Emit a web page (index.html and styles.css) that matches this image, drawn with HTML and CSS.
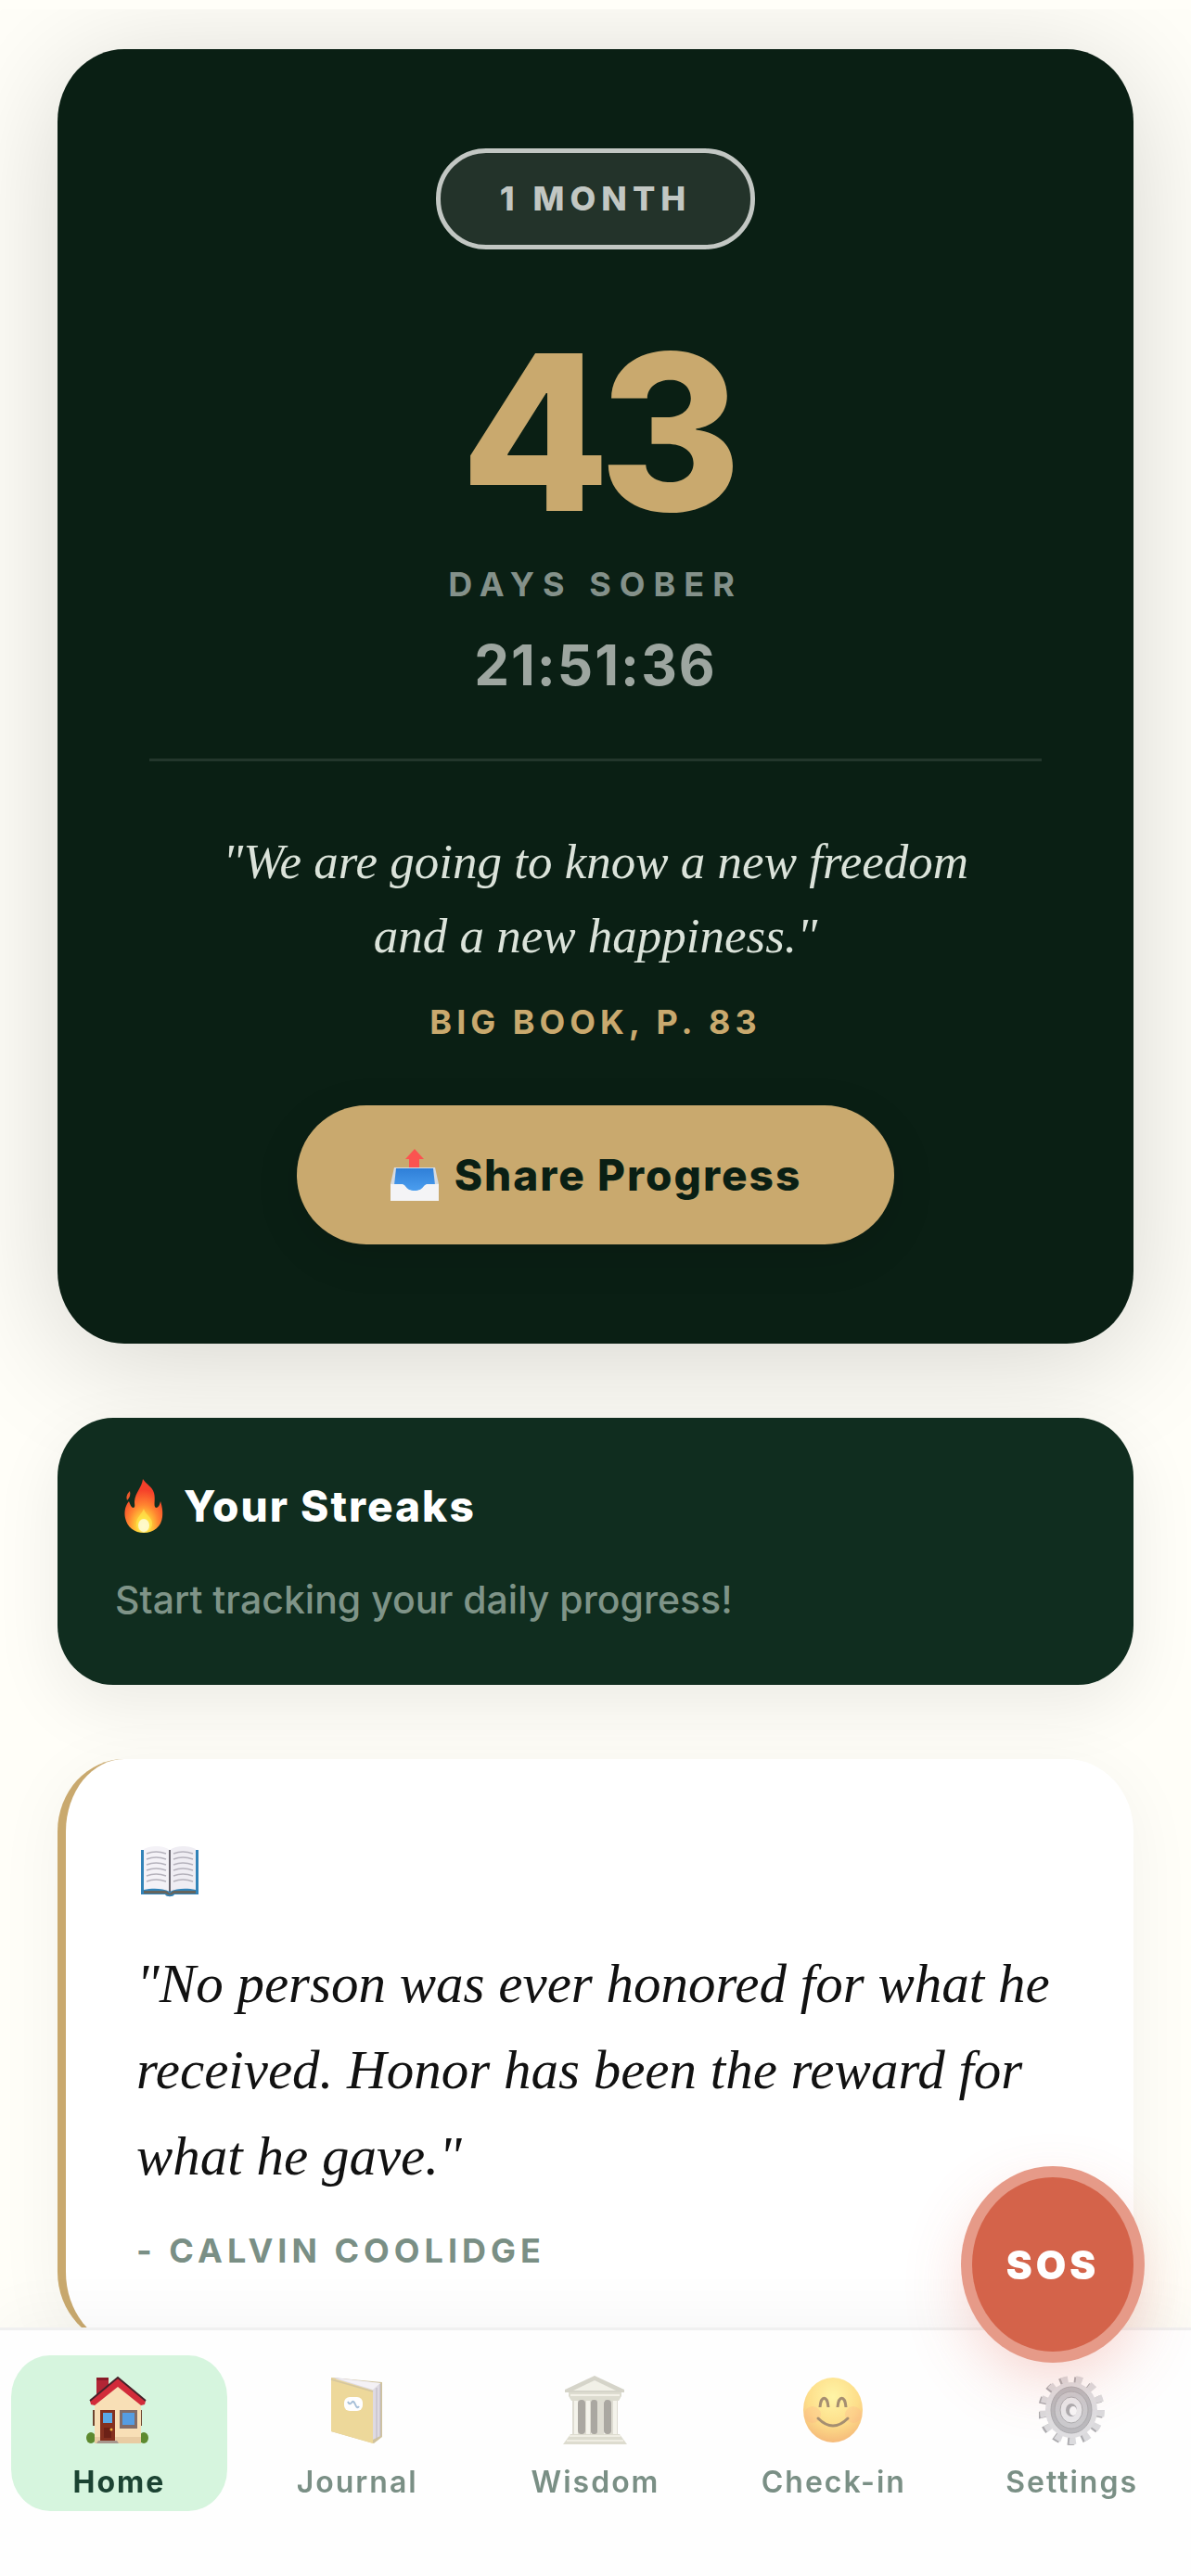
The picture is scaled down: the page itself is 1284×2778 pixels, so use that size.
FILE: index.html
```
<!DOCTYPE html>
<html lang="en">
<head>
  <meta charset="UTF-8">
  <meta name="viewport" content="width=device-width, initial-scale=1.0">
  <title>Days Sober</title>
  <link rel="stylesheet" href="styles.css">
</head>
<body>
  <header class="top-bar"></header>

  <main class="container">
    <section class="hero">
      <div class="badge">1 MONTH</div>
      <div class="days">43</div>
      <div class="days-label">DAYS SOBER</div>
      <div class="clock">21:51:36</div>
      <hr class="divider">
      <p class="promise">"We are going to know a new freedom and a new happiness."</p>
      <div class="source">BIG BOOK, P. 83</div>
      <button class="share-btn" type="button">
        <svg class="share-icon" viewBox="0 0 54 58" aria-hidden="true">
          <defs>
            <linearGradient id="tray" x1="0" y1="0" x2="0" y2="1">
              <stop offset="0" stop-color="#2f7fd8"/>
              <stop offset="1" stop-color="#4da0f0"/>
            </linearGradient>
          </defs>
          <path d="M27 1L37 12H32V22H21V12H17Z" fill="#fb5350"/>
          <path d="M5 21H49L53 39V57H1V39Z" fill="#d5dbe2"/>
          <path d="M7 22H47L49 40L38 48H16L5 40Z" fill="url(#tray)"/>
          <path d="M1 39H13C18 39 17 46 27 46S36 39 41 39H53V57H1Z" fill="#f4f4f6"/>
        </svg>
        <span>Share Progress</span>
      </button>
    </section>

    <section class="streaks">
      <h2 class="streaks-title">
        <svg class="fire-icon" viewBox="0 0 42 58" aria-hidden="true">
          <defs>
            <radialGradient id="flame" cx=".5" cy=".88" r=".8">
              <stop offset="0" stop-color="#fffbc0"/>
              <stop offset=".2" stop-color="#ffd83a"/>
              <stop offset=".5" stop-color="#ff8430"/>
              <stop offset=".85" stop-color="#f5402a"/>
            </radialGradient>
          </defs>
          <path d="M20 0C19 9 12 14 11 24C11 28 12 30 10 31C7 31 6 26 5 24C0 30 0 37 1 42C3 52 11 58 21 58C32 58 40 51 41 41C42 34 40 27 39 24C38 28 37 31 34 31C31 29 34 22 32 15C30 8 24 6 20 0Z" fill="url(#flame)"/>
          <path d="M6 13C2 17 2 20 3 23C6 20 7 17 6 13Z" fill="#ee5a2c"/>
          <path d="M21 32C19 38 13 41 13 48C13 53 16 57 21 57S30 53 30 48C30 41 23 39 21 32Z" fill="#ffe94f" opacity=".6"/>
          <ellipse cx="21" cy="50" rx="6" ry="7" fill="#fffde0" opacity=".8"/>
        </svg>
        <span>Your Streaks</span>
      </h2>
      <p class="streaks-text">Start tracking your daily progress!</p>
    </section>

    <section class="quote-card">
      <svg class="book-icon" viewBox="0 0 66 80" aria-hidden="true">
        <path d="M2 18H64V66H38C37 69 29 69 28 66H2Z" fill="#3283b8"/>
        <path d="M5 62H29L33 65L37 62H61V65H37C36 67 30 67 29 65H5Z" fill="#65655e"/>
        <path d="M5 17C13 13 26 13 33 18V63C25 59 14 59 5 61Z" fill="#f4f2f7"/>
        <path d="M61 17C53 13 40 13 33 18V63C41 59 52 59 61 61Z" fill="#efedf3"/>
        <path d="M33 18V63" stroke="#68646d" stroke-width="2"/>
        <path d="M8 22Q18 18 29 22M8 28Q18 24 29 28M8 34Q18 30 29 34M8 40Q18 36 29 40M8 46Q18 42 29 46M8 52Q18 48 29 52M37 22Q47 18 58 22M37 28Q47 24 58 28M37 34Q47 30 58 34M37 40Q47 36 58 40M37 46Q47 42 58 46M37 52Q47 48 58 52" fill="none" stroke="#b5b2bc" stroke-width="1.5"/>
      </svg>
      <blockquote class="quote">"No person was ever honored for what he received. Honor has been the reward for what he gave."</blockquote>
      <div class="author">- CALVIN COOLIDGE</div>
    </section>
  </main>

  <nav class="bottom-nav">
    <a href="#home" class="nav-item active">
      <svg class="nav-icon" viewBox="0 0 72 78" aria-hidden="true">
        <path d="M12 4H25V24L12 32Z" fill="#b22535"/>
        <path d="M12 4H25V7H12Z" fill="#8a1a28"/>
        <ellipse cx="6" cy="69" rx="5" ry="6" fill="#5d8a2f"/>
        <ellipse cx="63" cy="69" rx="5" ry="6" fill="#5d8a2f"/>
        <path d="M9 39V56M60 39V56" stroke="#6d4530" stroke-width="2"/>
        <path d="M10 30L35 11L60 30V75H10Z" fill="#f8dfb6"/>
        <path d="M10 68H60V75H10Z" fill="#e9cca3"/>
        <path d="M35 4L65 29L64 33L60 34L35 14L10 34L6 33L5 29Z" fill="#d22b3a"/>
        <path d="M5 29L35 4L65 29" fill="none" stroke="#46222a" stroke-width="2"/>
        <path d="M16 39H32V73H16Z" fill="#84301f"/>
        <path d="M19 42H29V53H19Z" fill="#5aa9e8"/>
        <path d="M20 58H28V69H20Z" fill="#6c2117"/>
        <circle cx="28" cy="60" r="1.5" fill="#f3b43c"/>
        <path d="M37 39H56V59H37Z" fill="#826c67"/>
        <path d="M40 42H53V55H40Z" fill="#559de2"/>
        <path d="M14 72H34L36 75H12Z" fill="#a8978d"/>
      </svg>
      <span>Home</span>
    </a>
    <a href="#journal" class="nav-item">
      <svg class="nav-icon" viewBox="0 0 72 78" aria-hidden="true">
        <path d="M8 4L63 9V68L54 75L8 62Z" fill="#b39d5d"/>
        <path d="M12 4L61 10V67L53 71Z" fill="#c9c3d0"/>
        <path d="M14 5L61 10L53 17Z" fill="#eeeaf0"/>
        <path d="M8 4L53 18V75L8 62Z" fill="#e2bf58"/>
        <path d="M8 6L53 19" stroke="#b9a160" stroke-width="1.5"/>
        <path d="M57 15V70M61 11V67" stroke="#948b9c" stroke-width="1"/>
        <rect x="22" y="25" width="20" height="15" rx="6" fill="#fff"/>
        <path d="M26 30Q28 34 30 31T34 33T38 35" fill="none" stroke="#6f97bf" stroke-width="2"/>
      </svg>
      <span>Journal</span>
    </a>
    <a href="#wisdom" class="nav-item">
      <svg class="nav-icon" viewBox="0 0 72 78" aria-hidden="true">
        <path d="M35 2L67 17V20H3V17Z" fill="#bbb9a7"/>
        <path d="M35 7L58 18H12Z" fill="#e9e7d8"/>
        <path d="M7 20H64V24L61 29H10L7 24Z" fill="#c8c6b3"/>
        <path d="M9 23H62" stroke="#eceadb" stroke-width="2"/>
        <path d="M11 29H60V66H11Z" fill="#c9c6b5"/>
        <path d="M15 29V66M33 29V66M47 29V66M57 29V66M28 29V66" stroke="#efecdf" stroke-width="4"/>
        <rect x="17" y="28" width="8" height="37" rx="4" fill="#746e65"/>
        <rect x="31" y="28" width="7" height="37" rx="3" fill="#746e65"/>
        <rect x="45" y="28" width="8" height="37" rx="4" fill="#746e65"/>
        <path d="M9 65H62L70 76H1Z" fill="#c8c6b1"/>
        <path d="M8 67H63M5 72H66" stroke="#e6e3d2" stroke-width="2"/>
      </svg>
      <span>Wisdom</span>
    </a>
    <a href="#check-in" class="nav-item">
      <svg class="nav-icon" viewBox="0 0 72 78" aria-hidden="true">
        <defs>
          <radialGradient id="face" cx=".5" cy=".3" r=".72">
            <stop offset="0" stop-color="#fff06e"/>
            <stop offset=".6" stop-color="#fdc93e"/>
            <stop offset="1" stop-color="#f08a20"/>
          </radialGradient>
        </defs>
        <ellipse cx="35" cy="39" rx="32" ry="35" fill="url(#face)"/>
        <ellipse cx="13" cy="44" rx="9" ry="9" fill="#ff7340" opacity=".25"/>
        <ellipse cx="57" cy="44" rx="9" ry="9" fill="#ff7340" opacity=".25"/>
        <path d="M21 36C22 23 29 23 30 36M40 36C41 23 48 23 49 36" fill="none" stroke="#6b4415" stroke-width="3"/>
        <path d="M19 48Q35 64 51 48" fill="none" stroke="#6b4415" stroke-width="3" stroke-linecap="round"/>
      </svg>
      <span>Check-in</span>
    </a>
    <a href="#settings" class="nav-item">
      <svg class="nav-icon" viewBox="0 0 72 78" aria-hidden="true">
        <ellipse cx="34" cy="40" rx="30" ry="32" fill="none" stroke="#76767c" stroke-width="10" pathLength="26" stroke-dasharray=".9 1.1"/>
        <ellipse cx="36" cy="39" rx="30" ry="32" fill="none" stroke="#c5c5ca" stroke-width="10" pathLength="26" stroke-dasharray=".9 1.1"/>
        <ellipse cx="35" cy="39" rx="28" ry="30" fill="#c9c9ce"/>
        <ellipse cx="35" cy="39" rx="22" ry="25" fill="#8e8e94" stroke="#77777d" stroke-width="1"/>
        <ellipse cx="35" cy="39" rx="18" ry="20" fill="#aaaab0" stroke="#77777d" stroke-width="1"/>
        <ellipse cx="35" cy="39" rx="12" ry="14" fill="#dcdce1" stroke="#77777c" stroke-width="1"/>
        <ellipse cx="35" cy="39" rx="6" ry="7" fill="#77777d"/>
        <ellipse cx="37" cy="40" rx="4" ry="5" fill="#f3f3f6"/>
      </svg>
      <span>Settings</span>
    </a>
  </nav>

  <button class="sos-btn" type="button">SOS</button>
</body>
</html>
```

FILE: styles.css
```
* { box-sizing: border-box; margin: 0; padding: 0; }
body { font-family: Inter, "Liberation Sans", sans-serif; background: #fffef8; color: #111; }

.top-bar { position: sticky; top: 0; z-index: 5; height: 10px; background: #fffef8; }
.container { display: flex; flex-direction: column; gap: 80px; padding: 43px 62px 240px; }

/* sobriety counter */
.hero { display: flex; flex-direction: column; align-items: center; padding: 107px 99px; background: #0a1f14; border-radius: 72px / 78px; box-shadow: 0 18px 130px rgba(0,0,0,.17); text-align: center; }
.badge { padding: 0 64px; border: 5px solid #c2c7c3; border-radius: 54px; background: #23332a; color: #c2c7c3; font-size: 36px; font-weight: 800; line-height: 99px; letter-spacing: 6px; }
.days { margin-top: 80px; color: #c9a96e; font-size: 234px; font-weight: 800; line-height: 234px; letter-spacing: -12px; }
.days-label { margin-top: 20px; color: #84918a; font-size: 36px; font-weight: 700; line-height: 54px; letter-spacing: 9px; }
.clock { margin-top: 24px; color: #9da6a0; font-size: 60px; font-weight: 700; line-height: 72px; letter-spacing: 2px; }
.divider { width: 100%; height: 3px; margin: 65px 0 68px; border: 0; background: #23362c; }
.promise { padding: 0 60px; color: #dbe3da; font-family: Georgia, "Liberation Serif", serif; font-size: 53px; font-style: italic; line-height: 80px; }
.source { margin-top: 26px; color: #c9a96e; font-size: 36px; font-weight: 700; line-height: 54px; letter-spacing: 5px; }
.share-btn { display: flex; align-items: center; gap: 16px; height: 150px; margin-top: 63px; padding: 0 100px; border: 0; border-radius: 75px; background: #c9a96e; color: #0a1f14; font-family: inherit; font-size: 46px; font-weight: 800; letter-spacing: 2px; box-shadow: 0 12px 48px rgba(0,0,0,.12); }
.share-icon { width: 54px; height: 58px; }

/* streaks */
.streaks { padding: 62px; background: #102d1f; border-radius: 60px / 64px; box-shadow: 0 24px 72px rgba(0,0,0,.08); }
.streaks-title { display: flex; align-items: center; gap: 22px; padding-left: 10px; color: #fff; font-size: 46px; font-weight: 800; line-height: 66px; letter-spacing: 2px; }
.fire-icon { width: 42px; height: 58px; }
.streaks-text { margin-top: 38px; color: #7f9488; font-size: 41px; font-weight: 500; line-height: 60px; }

/* daily quote */
.quote-card { padding: 80px 76px 74px; background: #fff; border-left: 9px solid #c9a96e; border-radius: 72px / 78px; box-shadow: 0 12px 72px rgba(0,0,0,.05); }
.book-icon { display: block; width: 66px; height: 80px; margin-left: 3px; }
.quote { margin-top: 36px; font-family: Georgia, "Liberation Serif", serif; font-size: 59px; font-style: italic; line-height: 93px; }
.author { margin-top: 28px; color: #7a8f85; font-size: 36px; font-weight: 700; line-height: 54px; letter-spacing: 5px; }

/* bottom nav */
.bottom-nav { position: fixed; left: 0; right: 0; bottom: 0; display: flex; gap: 24px; padding: 27px 12px 70px; background: #fefefe; border-top: 3px solid #f0f0f0; box-shadow: 0 -12px 60px rgba(0,0,0,.04); }
.nav-item { flex: 1; display: flex; flex-direction: column; align-items: center; gap: 18px; padding: 20px 0 10px; border-radius: 42px / 45px; color: #7a8f85; font-size: 32px; font-weight: 600; line-height: 42px; letter-spacing: 2px; text-decoration: none; }
.nav-item.active { background: #d6f5de; color: #1b4332; font-weight: 700; }
.nav-icon { width: 72px; height: 78px; opacity: .6; }
.active .nav-icon { opacity: 1; }

.sos-btn { position: fixed; right: 62px; bottom: 242px; width: 174px; height: 188px; border: 0; border-radius: 50%; background: #d4634a; color: #fff; font-family: inherit; font-size: 42px; font-weight: 900; letter-spacing: 4px; box-shadow: 0 0 0 12px #e69a88, 0 24px 72px rgba(224,90,70,.3); }
```
